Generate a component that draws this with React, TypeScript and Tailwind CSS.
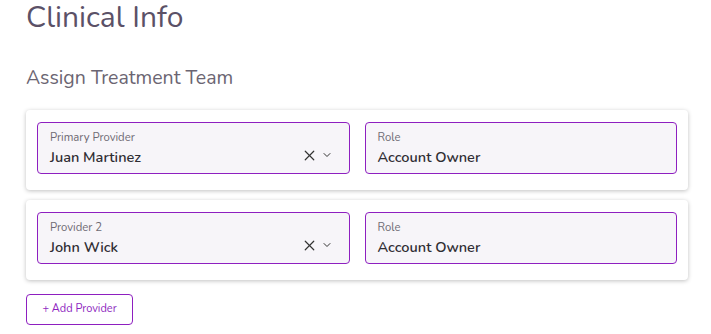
import { X, ChevronDown } from "lucide-react";

function Field({ label, value, clearable }: { label: string; value: string; clearable?: boolean }) {
  return (
    <div className="flex h-[52px] flex-1 items-center rounded-[4px] border border-[#8e1fc0] bg-[#f7f5f9] pl-3 pr-[16px]">
      <div className="flex-1">
        <div className="text-[11.3px] leading-[14px] text-[#6e6a73]">{label}</div>
        <div className="mt-[3px] text-[14.5px] font-semibold leading-[18px] text-[#2f2d33]">{value}</div>
      </div>
      {clearable && (
        <div className="mt-[14px] flex items-center gap-[3px] text-[#333]">
          <X size={17} strokeWidth={1.7} />
          <ChevronDown size={12} strokeWidth={2} />
        </div>
      )}
    </div>
  );
}

function ProviderCard({ label, name }: { label: string; name: string }) {
  return (
    <div className="flex gap-[15px] rounded-[4px] bg-white px-[11px] pt-[12px] pb-[16px] shadow-[0_1px_4px_rgba(0,0,0,0.25)]">
      <Field label={label} value={name} clearable />
      <Field label="Role" value="Account Owner" />
    </div>
  );
}

export default function App() {
  return (
    <div className="h-[334px] w-[711px] overflow-hidden bg-white pl-[26px] pr-[23px] font-['Nunito','Lato',sans-serif]">
      <h1 className="text-[30px] leading-[36px] text-[#5b5167]">Clinical Info</h1>
      <h2 className="mt-[30px] text-[19.5px] leading-[24px] text-[#6b6572]">Assign Treatment Team</h2>
      <div className="mt-[20px] space-y-[10px]">
        <ProviderCard label="Primary Provider" name="Juan Martinez" />
        <ProviderCard label="Provider 2" name="John Wick" />
      </div>
      <button className="mt-[14px] h-[31px] w-[107px] rounded-[4px] border border-[#8e1fc0] text-[11px] text-[#8e1fc0]">
        + Add Provider
      </button>
    </div>
  );
}
